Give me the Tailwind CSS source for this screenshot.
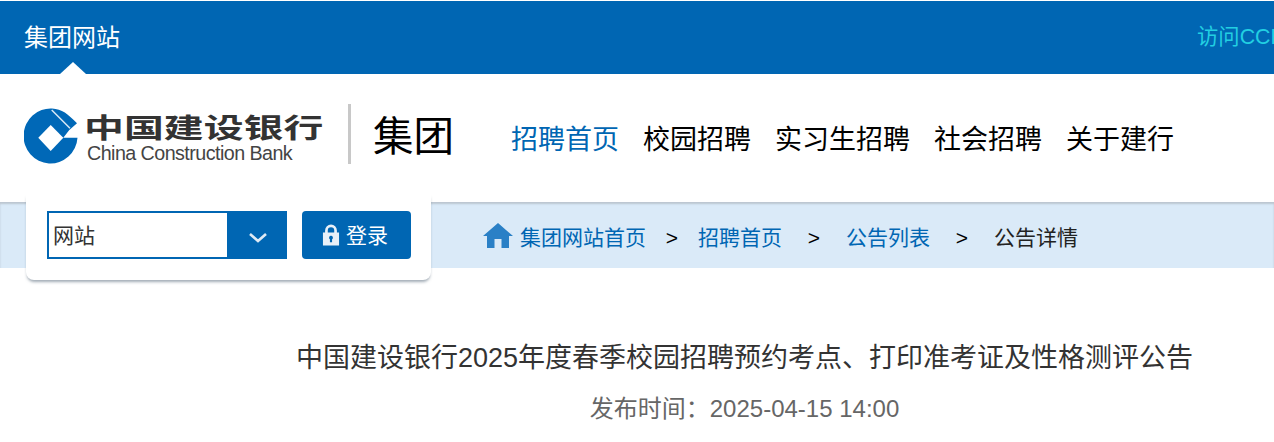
<!doctype html>
<html lang="zh-CN"><head><meta charset="utf-8"><script src="https://cdn.jsdelivr.net/npm/@tailwindcss/browser@4"></script></head>
<body class="bg-white overflow-hidden h-[442px] font-['Liberation_Sans','Noto_Sans_CJK_SC',sans-serif]">
<div class="mt-px h-[73px] bg-[#0066b3] relative flex items-center justify-between pl-6 whitespace-nowrap overflow-hidden">
  <span class="text-white text-[24px]">集团网站</span>
  <span class="absolute left-[1197px] top-[21px] text-[21.33px] leading-[30px] text-[#22cfe2]">访问CCB</span>
  <span class="absolute left-[60px] bottom-0 w-0 h-0 border-x-[13px] border-x-transparent border-b-[12px] border-b-white"></span>
</div>
<header class="h-[128px] flex items-center pl-6 whitespace-nowrap">
  <svg class="w-[54px] h-[57px] -mt-[3px] shrink-0" viewBox="0 0 54 57"><path fill="#0068b7" d="M53.500 29.700 A27 27.500 0 1 1 28 .5 C38 1 44 6 53 15.300 L45.300 22 L39.300 29.700 Z"/><path fill="#fff" d="M14.300 29.700 L26.700 17 L39.300 29.700 L26.700 43 Z"/><path d="M27.700 2 L46 20.300" stroke="#fff" stroke-width="1.500" opacity=".85"/></svg>
  <div class="ml-[9px] w-[260px] shrink-0 flex flex-col text-[#333] -mt-[2px]">
    <span class="font-bold text-[30px] leading-[30px] origin-left scale-x-[1.33] scale-y-[.92] -ml-[3px] mt-[1px]">中国建设银行</span>
    <span class="text-[19.7px] leading-[18px] tracking-[-0.55px] text-[#444]">China Construction Bank</span>
  </div>
  <span class="w-[3px] h-[60px] bg-[#c8c8c8] ml-[1px] -mt-[8px]"></span>
  <span class="ml-[22px] text-[40.5px] text-black leading-none w-[81px] -mt-[1px]">集团</span>
  <nav class="ml-[57px] flex gap-6 text-[27px] text-black leading-none mt-[5px]">
    <a class="text-[#0066b3]">招聘首页</a><a>校园招聘</a><a>实习生招聘</a><a>社会招聘</a><a>关于建行</a>
  </nav>
</header>
<div class="relative h-[66px] bg-[#daeaf8] shadow-[inset_0_2px_2px_#bcc6d0] flex items-center pl-[483px] pt-[5px] text-[21px] whitespace-nowrap">
  <svg class="w-[30px] h-[26px] mr-[7px] -mt-[4px] shrink-0" viewBox="0 0 30 26"><path fill="#2a80c6" d="M15 0 L30 13 L26 13 L26 25 L18.500 25 L18.500 16 L11.500 16 L11.500 25 L4 25 L4 13 L0 13 Z"/></svg>
  <a class="text-[#0066b3]">集团网站首页</a><span class="w-[52px] text-center text-black">&gt;</span>
  <a class="text-[#0066b3]">招聘首页</a><span class="w-[64px] text-center text-black">&gt;</span>
  <a class="text-[#0066b3]">公告列表</a><span class="w-[64px] text-center text-black">&gt;</span>
  <span class="text-[#222]">公告详情</span>
  <div class="absolute left-[26px] -top-[8px] w-[405px] h-[86px] bg-white rounded-b-lg shadow-[0_3px_3px_-1px_rgba(70,90,110,0.5)] flex items-start pt-[17px] pl-[21px]">
    <div class="w-[240px] h-[48px] flex border-2 border-[#0066b3]">
      <span class="flex-1 bg-white pl-1 text-[21px] leading-[46px] text-[#333]">网站</span>
      <span class="w-[58px] bg-[#0066b3] flex items-center justify-center"><svg class="w-5 h-3 mt-[6px] ml-[3px]" viewBox="0 0 20 12"><path d="M2 2 L10 9 L18 2" fill="none" stroke="#dfeaf5" stroke-width="2.600"/></svg></span>
    </div>
    <div class="ml-[15px] w-[109px] h-[48px] rounded bg-[#0066b3] flex items-center pl-5 pt-[2px] text-white text-[21px]">
      <svg class="w-[18px] h-[22px] mr-[6px] -mt-[3px] shrink-0" viewBox="1 0 15 20.500"><path fill="#e8f0f8" fill-rule="evenodd" d="M3 8 V6 A5.500 5.500 0 0 1 14 6 V8 H16 V20 H1 V8 Z M5.500 8 H11.500 V6 A3 3 0 0 0 5.500 6 Z M8.500 11 A1.800 1.800 0 0 0 7.500 14.300 V17 H9.500 V14.300 A1.800 1.800 0 0 0 8.500 11 Z"/></svg>
      登录
    </div>
  </div>
</div>
<main class="pl-[215px] pt-[72px] text-center whitespace-nowrap">
  <h1 class="text-[27px] leading-[36px] text-[#333]">中国建设银行2025年度春季校园招聘预约考点、打印准考证及性格测评公告</h1>
  <p class="mt-[17px] text-[24px] leading-[32px] text-[#666]">发布时间：2025-04-15 14:00</p>
</main>
</body></html>
